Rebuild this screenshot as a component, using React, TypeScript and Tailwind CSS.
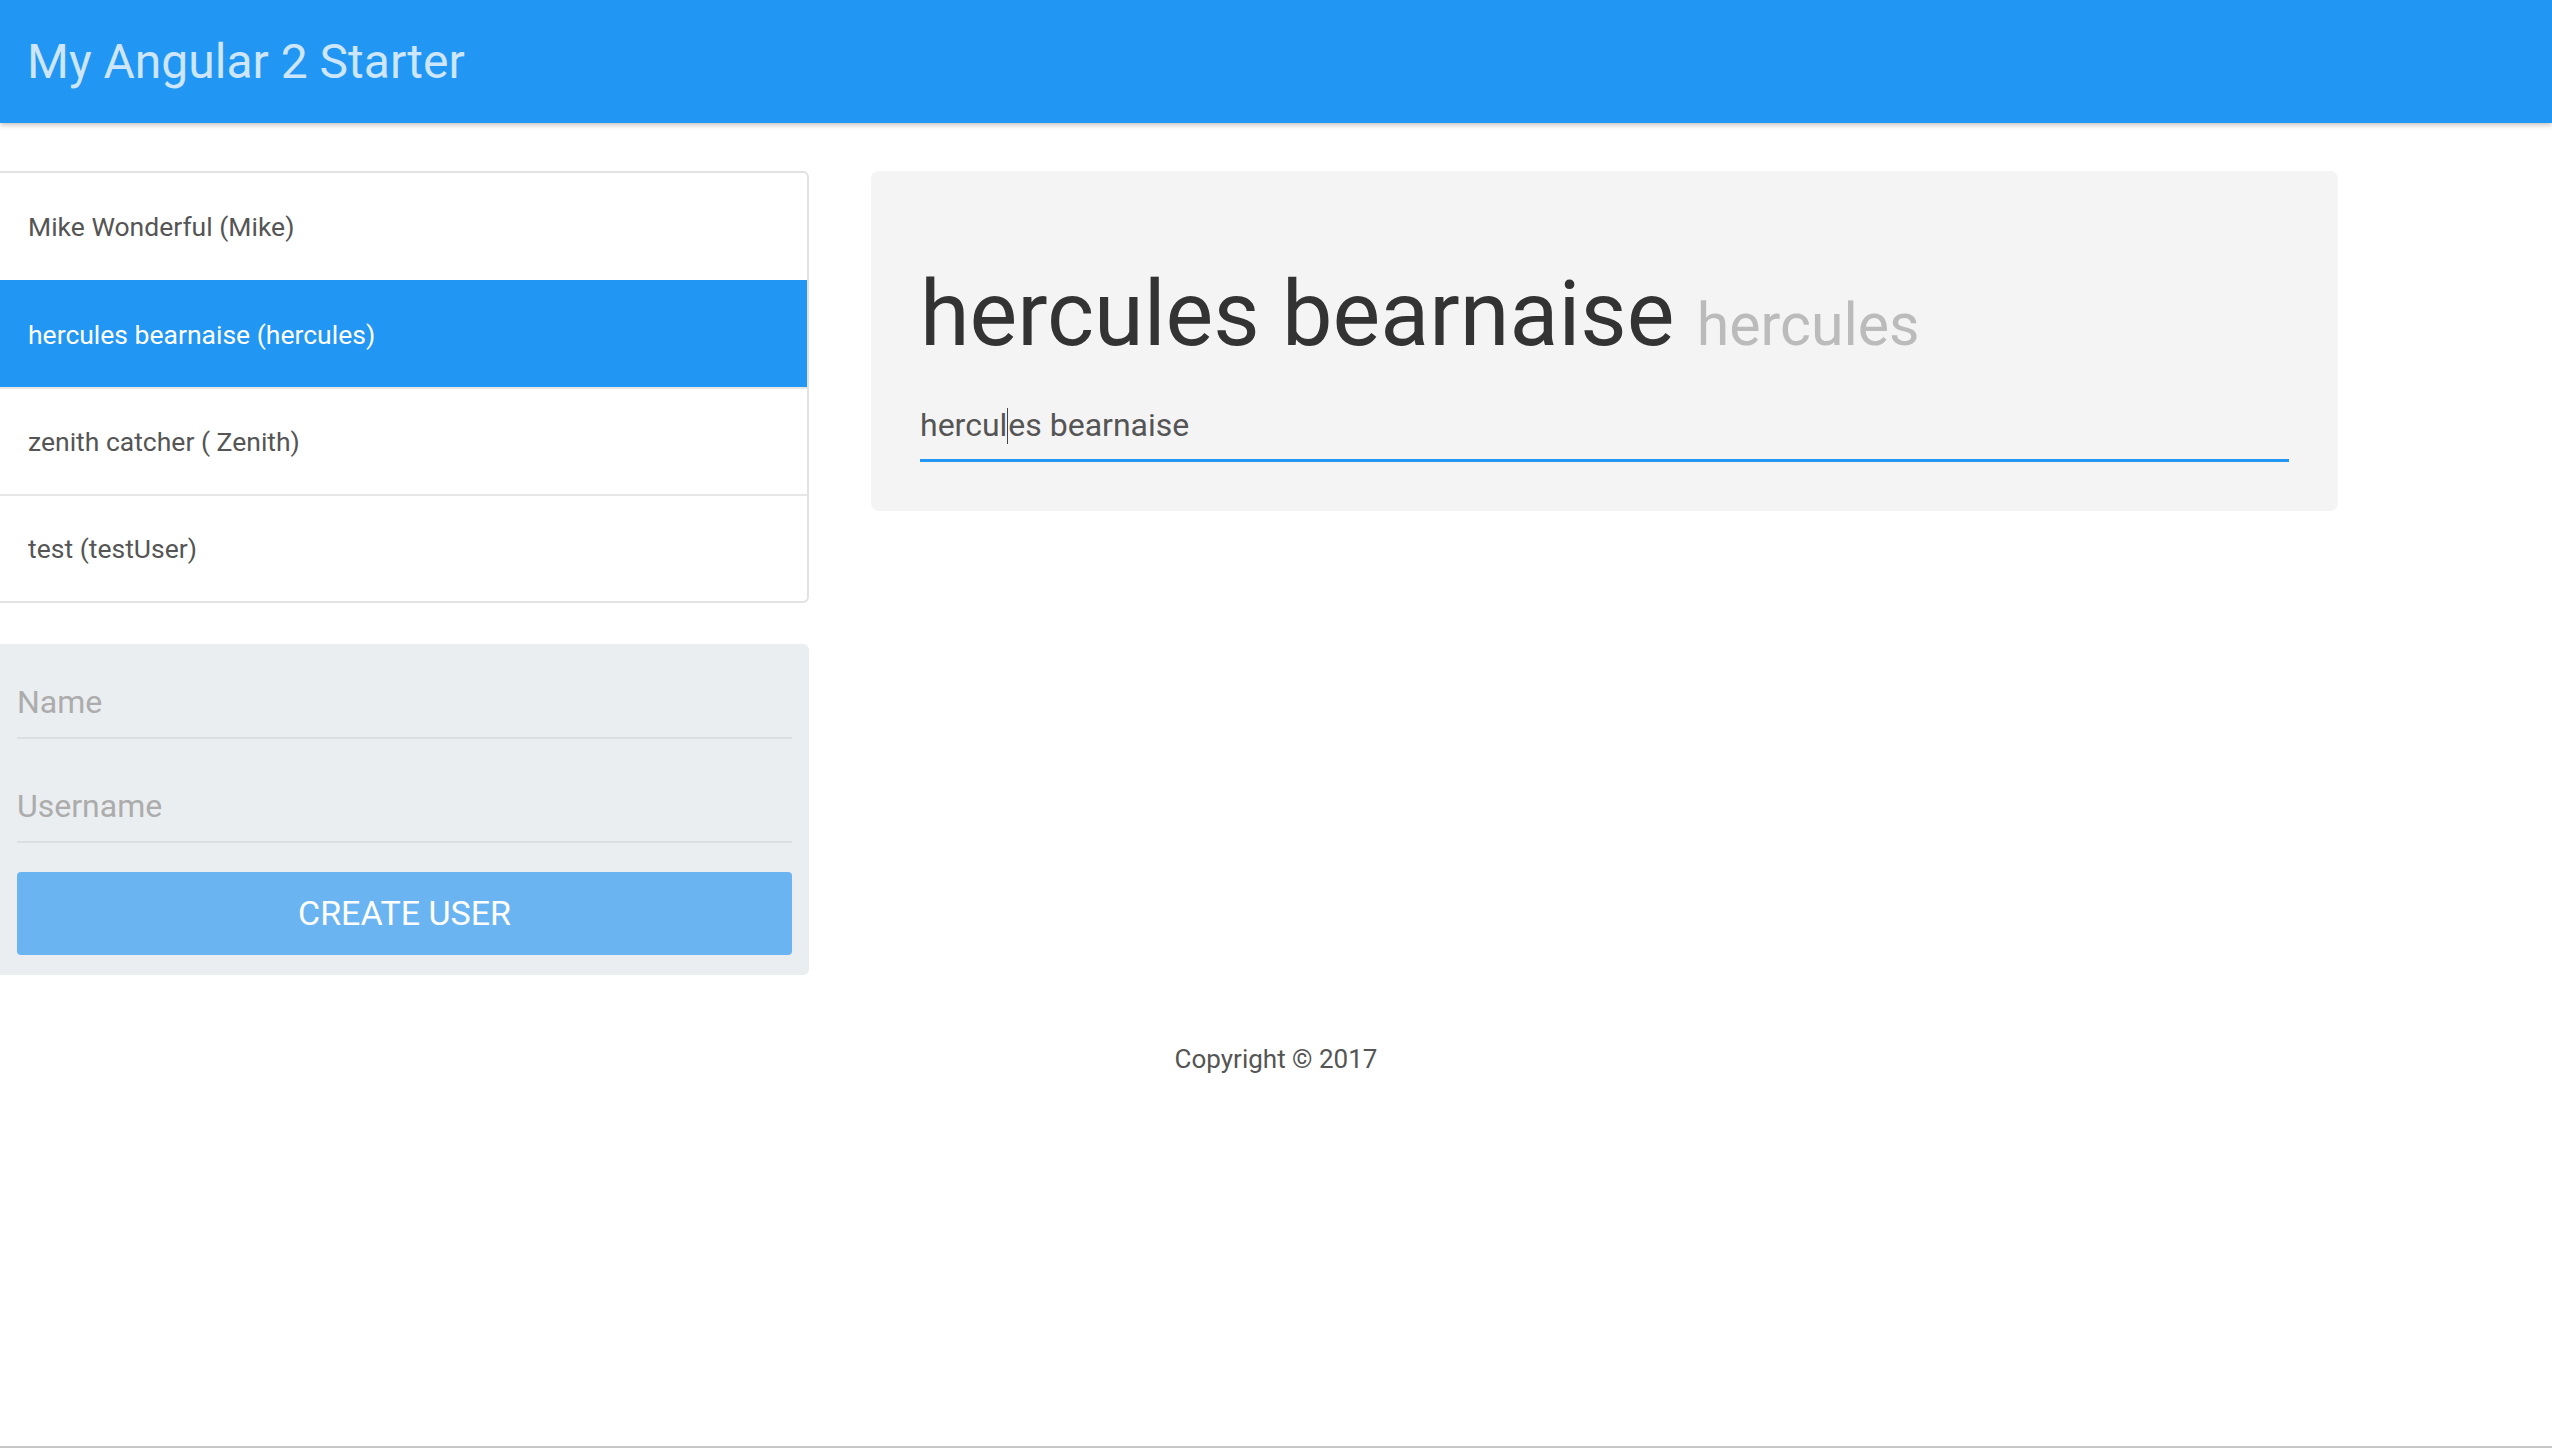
import React from "react";

const users = [
  { name: "Mike Wonderful", username: "Mike" },
  { name: "hercules bearnaise", username: "hercules" },
  { name: "zenith catcher", username: " Zenith" },
  { name: "test", username: "testUser" },
];

export default function App() {
  const selected = 1;
  return (
    <div className="h-[1448px] flex flex-col bg-white font-['Roboto',sans-serif]">
      <header className="h-[123px] bg-[#2196F3] flex items-center pl-[27px] shadow-[0_2px_5px_rgba(0,0,0,0.25)] relative z-10">
        <span className="text-[48px] text-[#cde6fc]">My Angular 2 Starter</span>
      </header>

      <main className="flex items-start gap-[62px] pt-[48px]">
        <div className="w-[809px] shrink-0">
          <div className="border-2 border-l-0 border-[#e2e2e2] rounded-r-[6px] overflow-hidden">
            {users.map((u, i) => (
              <div
                key={u.name}
                className={
                  i === selected
                    ? "h-[107px] flex items-center pl-[28px] text-[26.5px] bg-[#2196F3] text-white border-t-2 border-[#2196F3]"
                    : i === 0
                      ? "h-[107px] flex items-center pl-[28px] text-[26.5px] text-[#555]"
                      : "h-[107px] flex items-center pl-[28px] text-[26.5px] text-[#555] border-t-2 border-[#e6e6e6]"
                }
              >
                {u.name} ({u.username})
              </div>
            ))}
          </div>

          <div className="mt-[41px] bg-[#ebeef0] rounded-r-[6px] px-[17px] pt-[17px] pb-[20px] flex flex-col">
            <input
              placeholder="Name"
              className="w-full h-[78px] pt-[6px] bg-transparent outline-none text-[32px] text-[#555] placeholder:text-[#acacac] border-b-2 border-[#dcdfe2]"
            />
            <input
              placeholder="Username"
              className="mt-[26px] w-full h-[78px] pt-[6px] bg-transparent outline-none text-[32px] text-[#555] placeholder:text-[#acacac] border-b-2 border-[#dcdfe2]"
            />
            <button className="mt-[29px] h-[83px] w-full bg-[#6ab4f1] text-white text-[34px] uppercase rounded-[4px]">
              Create User
            </button>
          </div>
        </div>

        <section className="w-[1467px] shrink-0 bg-[#f4f4f4] rounded-[8px] p-[49px]">
          <h1 className="mt-[45px] text-[90px] leading-[100px] text-[#333] font-normal whitespace-nowrap">
            hercules bearnaise <small className="text-[59px] text-[#bbbbbb]">hercules</small>
          </h1>
          <div className="mt-[28px] pb-[11px] border-b-[3px] border-[#2196F3] text-[32px] leading-[45px] text-[#555]">
            hercul
            <span className="inline-block w-px h-[36px] bg-[#444] align-[-8px]" />
            es bearnaise
          </div>
        </section>
      </main>

      <footer className="mt-[65px] text-center text-[26px] leading-[39px] text-[#555]">
        Copyright © 2017
      </footer>

      <div className="mt-auto h-[2px] bg-[#c6c6c6]" />
    </div>
  );
}
